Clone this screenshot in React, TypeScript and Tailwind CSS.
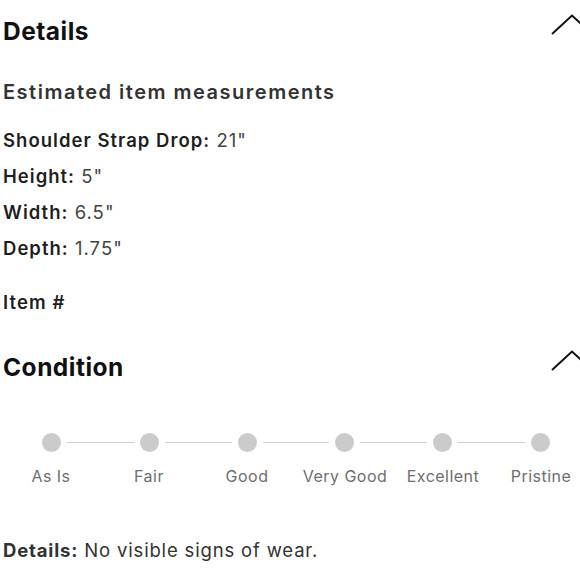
const Chevron = () => (
  <svg width="42" height="22" viewBox="0 0 42 22" className="mr-[-13px] shrink-0">
    <polyline points="1,20 21,1.5 41,20" fill="none" stroke="#111" strokeWidth="2" />
  </svg>
);

const measurements = [
  { label: "Shoulder Strap Drop:", value: '21"' },
  { label: "Height:", value: '5"' },
  { label: "Width:", value: '6.5"' },
  { label: "Depth:", value: '1.75"' },
];

const conditions = ["As Is", "Fair", "Good", "Very Good", "Excellent", "Pristine"];

const App = () => {
  return (
    <div className="w-[580px] h-[580px] overflow-hidden bg-white font-['Inter',sans-serif] text-[#1a1a1a]">
      <div className="pl-[3px]">
        <div className="flex items-center justify-between pt-[15px] h-[47px]">
          <h2 className="text-[24.5px] leading-[32px] font-bold tracking-[0.02em] text-[#111]">Details</h2>
          <div className="self-start mt-[-1px]">
            <Chevron />
          </div>
        </div>

        <p className="mt-[31px] text-[20px] leading-[28px] font-semibold tracking-[0.075em] text-[#333]">
          Estimated item measurements
        </p>

        <ul className="mt-[16px]">
          {measurements.map((m) => (
            <li key={m.label} className="text-[18.5px] leading-[36px] tracking-[0.055em] text-[#1f1f1f]">
              <span className="font-semibold">{m.label}</span>{" "}
              <span className="text-[#444]">{m.value}</span>
            </li>
          ))}
        </ul>

        <p className="mt-[18px] text-[18.5px] leading-[36px] font-semibold tracking-[0.06em] text-[#1f1f1f]">
          Item #
        </p>

        <div className="flex items-center justify-between mt-[31px] h-[32px]">
          <h2 className="text-[24.5px] leading-[32px] font-bold tracking-[0.02em] text-[#111]">Condition</h2>
          <div className="self-start mt-[-1px]">
            <Chevron />
          </div>
        </div>
      </div>

      <div className="mt-[50px] ml-[42px] w-[508px] flex items-center">
        {conditions.map((c, i) => (
          <div key={c} className={i === 0 ? "flex items-center" : "flex items-center flex-1"}>
            {i > 0 && <div className="flex-1 h-[1.5px] mx-[6px] bg-[#d0d0d0]" />}
            <div className="w-[19px] h-[19px] rounded-full bg-[#cbcbcb]" />
          </div>
        ))}
      </div>

      <div className="mt-[12px] ml-[2px] grid grid-cols-[repeat(6,98px)]">
        {conditions.map((c) => (
          <span
            key={c}
            className="text-center text-[16px] leading-[24px] tracking-[0.03em] text-[#6e6e6e] whitespace-nowrap"
          >
            {c}
          </span>
        ))}
      </div>

      <p className="mt-[48px] pl-[3px] text-[18.5px] leading-[28px] tracking-[0.045em] text-[#333]">
        <span className="font-bold">Details:</span> No visible signs of wear.
      </p>
    </div>
  );
};

export default App;
